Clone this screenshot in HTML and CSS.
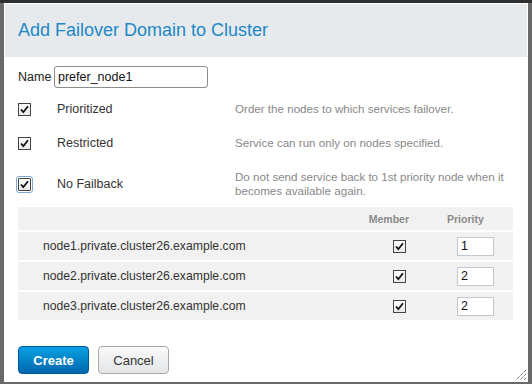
FILE: index.html
```html
<!DOCTYPE html>
<html>
<head>
<meta charset="utf-8">
<link rel="stylesheet" href="styles.css">
</head>
<body>
<div class="dialog">
  <div class="head"><h1 class="title">Add Failover Domain to Cluster</h1></div>
  <div class="content">
    <div class="name-row">
      <span class="name-label">Name</span>
      <span class="name-input">prefer_node1</span>
    </div>
    <div class="options">
      <div class="opt">
        <span class="cb-wrap"><span class="cb"><svg viewBox="0 0 11 11" width="11" height="11"><path d="M2 5.5 L4.3 8.2 L9 2.2" fill="none" stroke="#111" stroke-width="1.8"/></svg></span></span>
        <span class="opt-label">Prioritized</span>
        <span class="opt-desc">Order the nodes to which services failover.</span>
      </div>
      <div class="opt">
        <span class="cb-wrap"><span class="cb"><svg viewBox="0 0 11 11" width="11" height="11"><path d="M2 5.5 L4.3 8.2 L9 2.2" fill="none" stroke="#111" stroke-width="1.8"/></svg></span></span>
        <span class="opt-label">Restricted</span>
        <span class="opt-desc">Service can run only on nodes specified.</span>
      </div>
      <div class="opt">
        <span class="cb-wrap focus"><span class="cb"><svg viewBox="0 0 11 11" width="11" height="11"><path d="M2 5.5 L4.3 8.2 L9 2.2" fill="none" stroke="#111" stroke-width="1.8"/></svg></span></span>
        <span class="opt-label">No Failback</span>
        <span class="opt-desc">Do not send service back to 1st priority node when it becomes available again.</span>
      </div>
    </div>
    <div class="nodes">
      <div class="row head-row">
        <span class="c-name"></span>
        <span class="c-member">Member</span>
        <span class="c-prio">Priority</span>
      </div>
      <div class="row">
        <span class="c-name">node1.private.cluster26.example.com</span>
        <span class="c-member"><span class="cb"><svg viewBox="0 0 11 11" width="11" height="11"><path d="M2 5.5 L4.3 8.2 L9 2.2" fill="none" stroke="#111" stroke-width="1.8"/></svg></span></span>
        <span class="c-prio"><span class="prio-input">1</span></span>
      </div>
      <div class="row">
        <span class="c-name">node2.private.cluster26.example.com</span>
        <span class="c-member"><span class="cb"><svg viewBox="0 0 11 11" width="11" height="11"><path d="M2 5.5 L4.3 8.2 L9 2.2" fill="none" stroke="#111" stroke-width="1.8"/></svg></span></span>
        <span class="c-prio"><span class="prio-input">2</span></span>
      </div>
      <div class="row">
        <span class="c-name">node3.private.cluster26.example.com</span>
        <span class="c-member"><span class="cb"><svg viewBox="0 0 11 11" width="11" height="11"><path d="M2 5.5 L4.3 8.2 L9 2.2" fill="none" stroke="#111" stroke-width="1.8"/></svg></span></span>
        <span class="c-prio"><span class="prio-input">2</span></span>
      </div>
    </div>
    <div class="buttons">
      <button class="btn primary">Create</button>
      <button class="btn">Cancel</button>
    </div>
  </div>
  <svg class="grip" width="12" height="12" viewBox="0 0 12 12"><path d="M11 1 L1 11 M11 5 L5 11 M11 9 L9 11" stroke="#333" stroke-width="1" stroke-dasharray="1 1" fill="none"/></svg>
</div>
</body>
</html>
```
FILE: styles.css
```css
html, body {
  margin: 0;
  padding: 0;
}
body {
  width: 532px;
  height: 384px;
  overflow: hidden;
  background: linear-gradient(#2e2e2e 0, #2e2e2e 3px, #6a6a6a 3px);
  font-family: "Liberation Sans", Arial, sans-serif;
  font-size: 12.5px;
  line-height: 14px;
  color: #333;
  padding: 3px 4px 0 4px;
  box-sizing: border-box;
}
.dialog {
  position: relative;
  width: 524px;
  height: 379px;
  background: #fff;
  padding: 1px;
  box-sizing: border-box;
}
.head {
  height: 53px;
  background: #e6eaed;
  display: flex;
  align-items: center;
  padding-left: 13px;
}
.title {
  margin: 0;
  font-weight: normal;
  font-size: 18px;
  line-height: 22px;
  color: #1f88c6;
  padding-bottom: 1px;
}
.content {
  padding: 9px 13px 0 13px;
}
.name-row {
  display: flex;
  align-items: center;
  height: 22px;
}
.name-label {
  width: 36px;
  flex-shrink: 0;
  color: #222;
}
.name-input {
  width: 154px;
  height: 22px;
  box-sizing: border-box;
  border: 1px solid #8c8c8c;
  border-radius: 3px;
  padding-left: 3px;
  line-height: 20px;
  color: #111;
}
.options {
  margin-top: 14px;
  display: flex;
  flex-direction: column;
  gap: 20px;
}
.opt {
  display: flex;
  align-items: center;
  min-height: 14px;
}
.cb-wrap {
  width: 39px;
  flex-shrink: 0;
  display: flex;
}
.cb {
  width: 13px;
  height: 13px;
  flex-shrink: 0;
  box-sizing: border-box;
  border: 1px solid #444;
  background: linear-gradient(#fdfdfd, #e9e9e9);
  display: inline-flex;
  align-items: center;
  justify-content: center;
}
.cb-wrap.focus .cb {
  outline: 1px solid #7fa6d1;
  outline-offset: 1px;
  border-radius: 1px;
}
.opt-label {
  width: 178px;
  flex-shrink: 0;
  color: #333;
}
.opt-desc {
  width: 279px;
  flex-shrink: 0;
  font-size: 11.6px;
  line-height: 14px;
  color: #888;
}
.nodes {
  margin-top: 9px;
  width: 495px;
  display: flex;
  flex-direction: column;
  gap: 2px;
}
.row {
  display: grid;
  grid-template-columns: 346px 60px 89px;
  align-items: center;
  height: 28px;
  background: #f1f1f1;
}
.row.head-row {
  height: 23px;
}
.head-row span {
  font-size: 10.5px;
  font-weight: bold;
  color: #8a8a8a;
}
.c-name {
  padding-left: 25px;
  color: #333;
  font-size: 12.2px;
}
.c-member {
  display: flex;
  justify-content: flex-end;
  padding-right: 18px;
}
.head-row .c-member {
  padding-right: 15px;
}
.c-prio {
  padding-left: 23px;
  display: flex;
}
.row:not(.head-row) .c-prio {
  padding-left: 33px;
}
.prio-input {
  width: 37px;
  height: 19px;
  box-sizing: border-box;
  border: 1px solid #c4c8cc;
  background: #fff;
  padding-left: 3px;
  line-height: 17px;
  color: #111;
}
.buttons {
  margin-top: 26px;
  display: flex;
  gap: 9px;
}
.btn {
  height: 28px;
  width: 71px;
  border-radius: 4px;
  font-family: "Liberation Sans", Arial, sans-serif;
  font-size: 13px;
  border: 1px solid #a8a8a8;
  background: linear-gradient(#fafafa, #e2e4e6);
  color: #333;
  padding: 0;
}
.btn.primary {
  border-color: #02569a;
  background: linear-gradient(#0aa0e3, #0067ae);
  color: #fff;
  font-weight: bold;
}
.grip {
  position: absolute;
  right: 1px;
  bottom: 1px;
}
```
